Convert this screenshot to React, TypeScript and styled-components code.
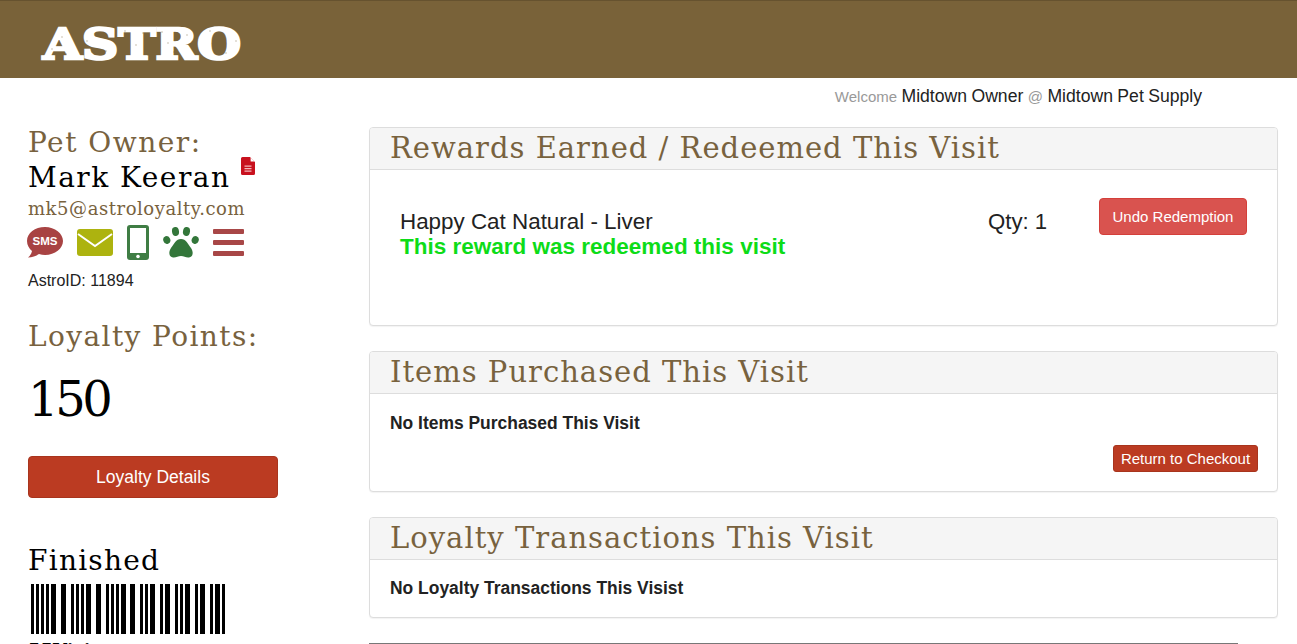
import React from 'react';
import styled, { createGlobalStyle } from 'styled-components';

const Brown = '#78623e';
const Slab = '"DejaVu Serif", "Liberation Serif", serif';
const Sans = '"Liberation Sans", Arial, sans-serif';

const BARS: [number, number][] = [
  [1, 3], [6, 3], [11, 3], [16, 3], [21, 5], [31, 5], [41, 3], [46, 3], [51, 3], [56, 5],
  [66, 5], [76, 3], [81, 3], [86, 3], [91, 5], [100, 5], [110, 3], [115, 3], [120, 5], [130, 3],
  [135, 5], [145, 3], [150, 3], [155, 5], [165, 3], [170, 5], [180, 3], [185, 5], [192, 3],
];

// worn spots on the logo letters
const SPECKS: [number, number][] = [
  [12, 24], [22, 12], [26, 29], [47, 16], [58, 9], [66, 26], [72, 14], [85, 6], [96, 20], [103, 8],
  [108, 30], [122, 7], [128, 18], [134, 27], [147, 10], [156, 29], [170, 6], [186, 28], [196, 16], [52, 27],
];

export default function App() {
  return (
    <Page>
      <GlobalStyle />
      <Header>
        <Logo viewBox="0 0 210 44" role="img" aria-label="Astro">
          <text x="5" y="34" textLength="198" lengthAdjust="spacingAndGlyphs">ASTRO</text>
          {SPECKS.map(([x, y]) => <circle key={x} cx={x + 2} cy={y} r="0.7" />)}
        </Logo>
      </Header>
      <Welcome>
        <Muted>Welcome</Muted> Midtown Owner <Muted>@</Muted> Midtown Pet Supply
      </Welcome>
      <Columns>
        <Sidebar>
          <OwnerLabel>Pet Owner:</OwnerLabel>
          <OwnerName>
            Mark Keeran
            <FileIcon viewBox="0 0 14 18">
              <path d="M1.500 0H9l5 5v11.500a1.500 1.500 0 0 1-1.500 1.500h-11A1.500 1.500 0 0 1 0 16.500v-15A1.500 1.500 0 0 1 1.500 0z" fill="#c8111e" />
              <path d="M9.600 0.400 13.600 4.600H9.600z" fill="#fff" />
              <path d="M3.500 8.500h7v1.200h-7zM3.500 11h7v1.200h-7zM3.500 13.500h7v1.200h-7z" fill="#f3b7ba" />
            </FileIcon>
          </OwnerName>
          <Email>mk5@astroloyalty.com</Email>
          <IconRow>
            <SmsIcon viewBox="0 0 36 31">
              <path d="M18 0C8 0 0 6 0 14c0 4 2 7.500 5 10-.5 2.500-2 5-4 6.500 4 0 8-1.500 11-3.500 2 .5 4 1 6 1 10 0 18-6.500 18-14S28 0 18 0z" fill="#a84343" />
              <text x="18" y="18" textAnchor="middle" textLength="25" lengthAdjust="spacingAndGlyphs">SMS</text>
            </SmsIcon>
            <MailIcon viewBox="0 0 36 27">
              <rect width="36" height="27" rx="3" fill="#adb30f" />
              <path d="M1 5 18 17 35 5" fill="none" stroke="#fff" strokeWidth="2" />
            </MailIcon>
            <PhoneIcon viewBox="0 0 22 35">
              <rect width="22" height="35" rx="3" fill="#3f7d44" />
              <rect x="3" y="3" width="16" height="25" fill="#fff" />
              <circle cx="11" cy="31.500" r="1.800" fill="#fff" />
            </PhoneIcon>
            <PawIcon viewBox="0 0 36 31">
              <g fill="#33763a">
                <ellipse cx="3.800" cy="13" rx="3.500" ry="4" transform="rotate(-20 3.800 13)" />
                <ellipse cx="12.500" cy="4.500" rx="3.500" ry="4.500" transform="rotate(-8 12.500 4.500)" />
                <ellipse cx="23.500" cy="4.500" rx="3.500" ry="4.500" transform="rotate(8 23.500 4.500)" />
                <ellipse cx="32.200" cy="13" rx="3.500" ry="4" transform="rotate(20 32.200 13)" />
                <path d="M18 12c-5 0-7 5-10 9-2.500 3.500-2.500 9 2 9.500 3 .4 5-1.500 8-1.500s5 1.900 8 1.500c4.500-.5 4.500-6 2-9.500-3-4-5-9-10-9z" />
              </g>
            </PawIcon>
            <MenuIcon viewBox="0 0 31 27">
              <g fill="#a84747">
                <rect width="31" height="5" rx="1" />
                <rect y="11" width="31" height="5" rx="1" />
                <rect y="22" width="31" height="5" rx="1" />
              </g>
            </MenuIcon>
          </IconRow>
          <AstroId>AstroID: 11894</AstroId>
          <PointsLabel>Loyalty Points:</PointsLabel>
          <Points>150</Points>
          <DetailsButton>Loyalty Details</DetailsButton>
          <Status>Finished</Status>
          <Barcode viewBox="0 0 196 50">
            {BARS.map(([x, w]) => <rect key={x} x={x} width={w} height="50" />)}
          </Barcode>
          <BarcodeText>55Visit</BarcodeText>
        </Sidebar>
        <Content>
          <Panel>
            <PanelTitle>Rewards Earned / Redeemed This Visit</PanelTitle>
            <RewardBody>
              <RewardInfo>
                <RewardName>Happy Cat Natural - Liver</RewardName>
                <Redeemed>This reward was redeemed this visit</Redeemed>
              </RewardInfo>
              <Qty>Qty: 1</Qty>
              <UndoButton>Undo Redemption</UndoButton>
            </RewardBody>
          </Panel>
          <Panel>
            <PanelTitle>Items Purchased This Visit</PanelTitle>
            <PanelBody>
              <Note>No Items Purchased This Visit</Note>
              <Actions><ReturnButton>Return to Checkout</ReturnButton></Actions>
            </PanelBody>
          </Panel>
          <Panel>
            <PanelTitle>Loyalty Transactions This Visit</PanelTitle>
            <PanelBody $tight>
              <Note>No Loyalty Transactions This Visist</Note>
            </PanelBody>
          </Panel>
          <NextPanel />
        </Content>
      </Columns>
    </Page>
  );
}

const GlobalStyle = createGlobalStyle`
  html, body {
    margin: 0;
    padding: 0;
    background: #fff;
    overflow: hidden;
  }
`;

const Page = styled.div`
  height: 644px;
  overflow: hidden;
  font-family: ${Sans};
  color: #222;
`;

const Header = styled.header`
  height: 78px;
  box-sizing: border-box;
  background: #796239;
  border-top: 1px solid #66522f;
  padding: 24px 0 0 38px;
`;

const Logo = styled.svg`
  display: block;
  width: 210px;
  height: 44px;
  text {
    font-family: ${Slab};
    font-weight: 700;
    font-size: 43px;
    fill: #fff;
    stroke: #fff;
    stroke-width: 2.6px;
  }
  circle {
    fill: #796239;
    opacity: 0.55;
  }
`;

const Welcome = styled.div`
  height: 36px;
  line-height: 36px;
  box-sizing: border-box;
  padding-right: 95px;
  text-align: right;
  font-size: 17.6px;
  word-spacing: -0.45px;
  color: #222;
`;

const Muted = styled.span`
  font-size: 15px;
  color: #999;
`;

const Columns = styled.main`
  display: grid;
  grid-template-columns: 369px 909px;
  padding-top: 13px;
`;

const Sidebar = styled.aside`
  padding-left: 28px;
`;

const OwnerLabel = styled.div`
  margin: -1px 0 1px;
  font-family: ${Slab};
  font-size: 28px;
  letter-spacing: 1.5px;
  line-height: 33px;
  color: ${Brown};
`;

const OwnerName = styled.div`
  position: relative;
  font-family: ${Slab};
  font-size: 28px;
  letter-spacing: 1.5px;
  line-height: 36px;
  color: #000;
`;

const FileIcon = styled.svg`
  position: absolute;
  left: 213px;
  top: -3px;
  width: 14px;
  height: 18px;
`;

const Email = styled.div`
  font-family: ${Slab};
  font-size: 18px;
  letter-spacing: 0.55px;
  line-height: 25px;
  color: ${Brown};
`;

const IconRow = styled.div`
  display: flex;
  align-items: center;
  height: 36px;
  margin-top: 3px;
`;

const SmsIcon = styled.svg`
  width: 36px;
  height: 31px;
  margin: 0 14px 0 -1px;
  overflow: visible;
  text {
    font-family: ${Sans};
    font-weight: 700;
    font-size: 11.5px;
    fill: #fff;
  }
`;

const MailIcon = styled.svg`
  width: 36px;
  height: 27px;
  margin-right: 14px;
`;

const PhoneIcon = styled.svg`
  width: 22px;
  height: 35px;
  margin-right: 14px;
`;

const PawIcon = styled.svg`
  width: 36px;
  height: 31px;
  margin-right: 14px;
`;

const MenuIcon = styled.svg`
  width: 31px;
  height: 27px;
`;

const AstroId = styled.div`
  margin-top: 11px;
  font-size: 16px;
  line-height: 20px;
`;

const PointsLabel = styled.div`
  margin-top: 28px;
  font-family: ${Slab};
  font-size: 28px;
  letter-spacing: 1.4px;
  line-height: 36px;
  color: ${Brown};
`;

const Points = styled.div`
  margin-top: 16px;
  font-family: ${Slab};
  font-size: 48px;
  letter-spacing: -3.4px;
  line-height: 56px;
  color: #000;
`;

const DetailsButton = styled.button`
  display: block;
  width: 250px;
  height: 42px;
  margin-top: 29px;
  border: 1px solid #a8341d;
  border-radius: 4px;
  background: #bb3b22;
  color: #fff;
  font-family: ${Sans};
  font-size: 17.5px;
`;

const Status = styled.div`
  margin-top: 45px;
  font-family: ${Slab};
  font-size: 28px;
  letter-spacing: 1.25px;
  line-height: 36px;
  color: #000;
`;

const Barcode = styled.svg`
  display: block;
  width: 196px;
  height: 50px;
  margin: 5px 0 0 2px;
`;

const BarcodeText = styled.div`
  margin-top: 7px;
  font-family: ${Slab};
  font-size: 18px;
  font-weight: 700;
  line-height: 20px;
  color: #000;
`;

const Content = styled.section`
  display: flex;
  flex-direction: column;
  gap: 25px;
`;

const Panel = styled.article`
  border: 1px solid #ddd;
  border-radius: 4px;
  background: #fff;
  box-shadow: 0 1px 1px rgba(0, 0, 0, 0.05);
`;

const PanelTitle = styled.h2`
  margin: 0;
  height: 42px;
  box-sizing: border-box;
  padding-left: 20px;
  background: #f5f5f5;
  border-bottom: 1px solid #ddd;
  border-radius: 3px 3px 0 0;
  font-family: ${Slab};
  font-size: 29px;
  font-weight: 400;
  letter-spacing: 1px;
  line-height: 41px;
  color: ${Brown};
`;

const PanelBody = styled.div<{ $tight?: boolean }>`
  padding: ${props => (props.$tight ? '18px 19px 19px 20px' : '19px 19px 19px 20px')};
`;

const RewardBody = styled.div`
  display: flex;
  align-items: flex-start;
  height: 155px;
  box-sizing: border-box;
  padding: 28px 30px 0 30px;
`;

const RewardInfo = styled.div`
  flex: 1;
  padding-top: 12px;
`;

const RewardName = styled.div`
  font-size: 22.4px;
  line-height: 24px;
  color: #222;
`;

const Redeemed = styled.div`
  font-size: 22.5px;
  font-weight: 700;
  line-height: 25px;
  color: #0ddc18;
`;

const Qty = styled.div`
  width: 111px;
  padding-top: 12px;
  font-size: 22.2px;
  line-height: 24px;
`;

const UndoButton = styled.button`
  width: 148px;
  height: 37px;
  padding: 0;
  border: 1px solid #d43f3a;
  border-radius: 4px;
  background: #d9534f;
  color: #fff;
  font-family: ${Sans};
  font-size: 15px;
`;

const Note = styled.div`
  font-size: 17.45px;
  font-weight: 700;
  line-height: 20px;
  color: #222;
`;

const Actions = styled.div`
  display: flex;
  justify-content: flex-end;
  margin-top: 12px;
`;

const ReturnButton = styled.button`
  width: 145px;
  height: 27px;
  padding: 0;
  border: 1px solid #a8341d;
  border-radius: 3px;
  background: #bb3b22;
  color: #fff;
  font-family: ${Sans};
  font-size: 15px;
`;

const NextPanel = styled.div`
  width: 869px;
  height: 40px;
  border-top: 1px solid #777;
`;
